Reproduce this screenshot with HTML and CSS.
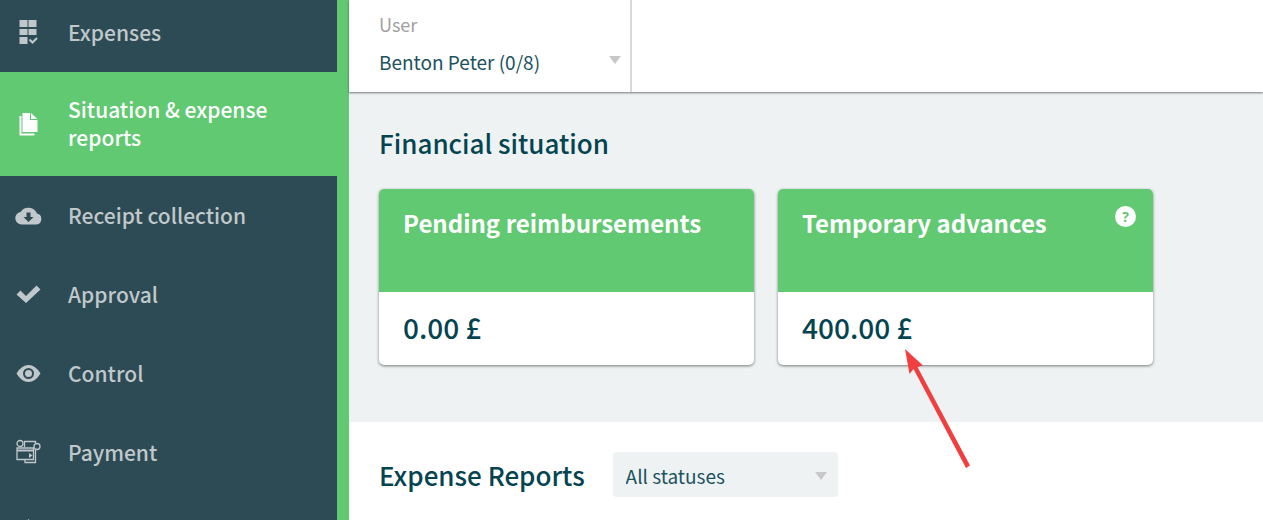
FILE: index.html
```html
<!DOCTYPE html>
<html lang="en">
<head>
  <meta charset="UTF-8">
  <meta name="viewport" content="width=device-width, initial-scale=1.0">
  <title>Situation &amp; expense reports</title>
  <link rel="stylesheet" href="styles.css">
</head>
<body>
  <!-- side menu -->
  <nav class="sidebar">
    <ul class="menu">
      <li>
        <a href="#">
          <svg class="icon" viewBox="0 0 28 28" aria-hidden="true">
            <path d="M4.500 1h8v7h-8zM13.500 1h8v7h-8zM4.500 10h8v6h-8zM13.500 10h8v6h-8zM4.500 18h8v7h-8z"/>
            <path class="line" d="M14.500 20.500l3 3 4.500-4.500"/>
          </svg>
          <span>Expenses</span>
        </a>
      </li>
      <li class="active">
        <a href="#">
          <svg class="icon" viewBox="0 0 28 28" aria-hidden="true">
            <path d="M7.500 2h7.500v7h7.500v12h-15z"/>
            <path d="M16 2l6.500 6h-6.500z"/>
            <path d="M4.500 5h2v17.500h13v2h-15z"/>
          </svg>
          <span>Situation &amp; expense reports</span>
        </a>
      </li>
      <li>
        <a href="#">
          <svg class="icon" viewBox="0 0 28 28" aria-hidden="true">
            <path fill-rule="evenodd" d="M6.500 22.500a6.300 6.300 0 0 1-1-12.500 9.300 9.300 0 0 1 16.500 1.500 5.600 5.600 0 0 1-.500 11zM11.500 10.500v4.500H8.500l5 5 5-5H15.500v-4.500z"/>
          </svg>
          <span>Receipt collection</span>
        </a>
      </li>
      <li>
        <a href="#">
          <svg class="icon" viewBox="0 0 28 28" aria-hidden="true">
            <path d="M1.500 13.500l4-4 5.500 5.500L21.500 4.500 25.500 8.500 11 22z"/>
          </svg>
          <span>Approval</span>
        </a>
      </li>
      <li>
        <a href="#">
          <svg class="icon" viewBox="0 0 28 28" aria-hidden="true">
            <path fill-rule="evenodd" d="M1.500 13.500Q6.500 5 13.500 5T25.500 13.500Q20.500 22 13.500 22T1.500 13.500zM13.500 8a5.500 5.500 0 1 0 0 11 5.500 5.500 0 0 0 0-11z"/>
            <circle cx="13.500" cy="13.500" r="3.500"/>
          </svg>
          <span>Control</span>
        </a>
      </li>
      <li>
        <a href="#">
          <svg class="icon" viewBox="0 0 28 28" aria-hidden="true">
            <circle class="line thin" cx="5" cy="4.500" r="3"/>
            <circle class="line thin" cx="22" cy="7.500" r="3"/>
            <path class="line thin" d="M9.500 8V2.500h11v2M20.500 11v12.500H10V21"/>
            <path class="line thin" d="M2 9h16.500v11.500H2z"/>
            <path d="M2 10.500h17v2H2zM14 14l3.500 2.500-3.500 2.500z"/>
          </svg>
          <span>Payment</span>
        </a>
      </li>
      <li>
        <a href="#">
          <svg class="icon" viewBox="0 0 28 28" aria-hidden="true">
            <path d="M13.500 1l4 5 5 2v12h-18V8l5-2z"/>
          </svg>
        </a>
      </li>
    </ul>
  </nav>

  <main>
    <!-- user filter -->
    <header class="topbar">
      <div class="user-filter">
        <label for="user">User</label>
        <select id="user">
          <option>Benton Peter (0/8)</option>
        </select>
      </div>
    </header>

    <section class="situation">
      <h1>Financial situation</h1>
      <div class="cards">
        <article class="card">
          <div class="card-head">
            <h2>Pending reimbursements</h2>
          </div>
          <p class="amount">0.00 £</p>
        </article>
        <article class="card">
          <div class="card-head">
            <h2>Temporary advances</h2>
            <button class="help" type="button">?</button>
          </div>
          <p class="amount">400.00 £</p>
          <!-- arrow pointing at the amount -->
          <svg class="arrow" viewBox="0 0 70 124" aria-hidden="true">
            <path d="M2 1L20 17.500 14.500 19 67 117.500 63 120 10.500 21 6.500 26z"/>
          </svg>
        </article>
      </div>
    </section>

    <section class="reports">
      <h1>Expense Reports</h1>
      <select class="status" aria-label="Status">
        <option>All statuses</option>
      </select>
    </section>
  </main>
</body>
</html>
```
FILE: styles.css
```css
* {
  box-sizing: border-box;
}

body {
  margin: 0;
  display: flex;
  height: 100vh;
  overflow: hidden;
  font-family: "Noto Sans CJK SC", "Open Sans", sans-serif;
  color: #044451;
  background: #fff;
}

h1, h2, p {
  margin: 0;
}

/* side menu */
.sidebar {
  flex: 0 0 349px;
  overflow: hidden;
  background: #2d4b54;
  border-right: 12px solid #60c971;
}

/* the list is scrolled a little under the top edge */
.menu {
  list-style: none;
  margin: -7px 0 0;
  padding: 0;
}

.menu a {
  display: flex;
  align-items: center;
  gap: 25px;
  min-height: 79px;
  padding: 23px 40px 25px 15px;
  font-size: 21px;
  font-weight: 500;
  line-height: 28px;
  color: #c0c8cb;
  text-decoration: none;
}

.menu .active a {
  background: #60c971;
  color: #fff;
}

.icon {
  flex: none;
  width: 28px;
  height: 28px;
  margin-top: 3px;
  fill: currentColor;
}

.icon .line {
  fill: none;
  stroke: currentColor;
  stroke-width: 2;
}

.icon .thin {
  stroke-width: 1.3;
}

main {
  flex: 1;
  min-width: 0;
}

/* top bar with the user filter */
.topbar {
  position: relative;
  display: flex;
  background: #fff;
  box-shadow: 0 1px 2px rgba(0, 0, 0, 0.5);
}

.user-filter {
  width: 283px;
  padding: 10px 9px 17px 30px;
  border-right: 2px solid #d8d8d8;
}

.user-filter label {
  display: block;
  font-size: 18px;
  line-height: 28px;
  color: #a0a0a0;
}

select {
  appearance: none;
  border: 0;
  font-family: inherit;
  font-size: 19px;
  color: #1c5260;
  background: url("data:image/svg+xml,%3Csvg xmlns='http://www.w3.org/2000/svg' width='12' height='8'%3E%3Cpath d='M0 0h12L6 8z' fill='%23c8c8c8'/%3E%3C/svg%3E") no-repeat right center;
}

.user-filter select {
  width: 100%;
  height: 28px;
  margin-top: 9px;
  padding: 0;
  background-position: right 9px;
}

/* financial situation */
.situation {
  padding: 31px 30px 57px;
  background: #eef2f3;
}

h1 {
  font-size: 26px;
  font-weight: 500;
  line-height: 40px;
}

.cards {
  display: flex;
  gap: 24px;
  margin-top: 26px;
}

.card {
  position: relative;
  flex: 0 1 375px;
  background: #fff;
  border-radius: 5px;
  box-shadow: 0 1px 3px rgba(0, 0, 0, 0.5);
}

.card-head {
  display: flex;
  justify-content: space-between;
  align-items: flex-start;
  min-height: 103px;
  padding: 17px 17px 0 24px;
  background: #60c971;
  border-radius: 5px 5px 0 0;
}

h2 {
  font-size: 24px;
  font-weight: 700;
  line-height: 34px;
  color: #fff;
}

.help {
  width: 21px;
  height: 21px;
  padding: 0;
  border: 0;
  border-radius: 50%;
  background: #fff;
  color: #60c971;
  font-family: "Open Sans", sans-serif;
  font-size: 14px;
  font-weight: 700;
  line-height: 20px;
}

.amount {
  padding: 15px 24px 18px;
  font-size: 28px;
  font-weight: 500;
  line-height: 40px;
}

.arrow {
  position: absolute;
  top: 159px;
  left: 125px;
  width: 70px;
  height: 124px;
  fill: #f13f3f;
}

/* expense reports */
.reports {
  display: flex;
  align-items: center;
  gap: 28px;
  padding: 30px;
}

.status {
  width: 225px;
  height: 45px;
  padding: 2px 13px 0;
  border-radius: 4px;
  background-color: #eef2f3;
  background-position: right 11px top 20px;
}
```
